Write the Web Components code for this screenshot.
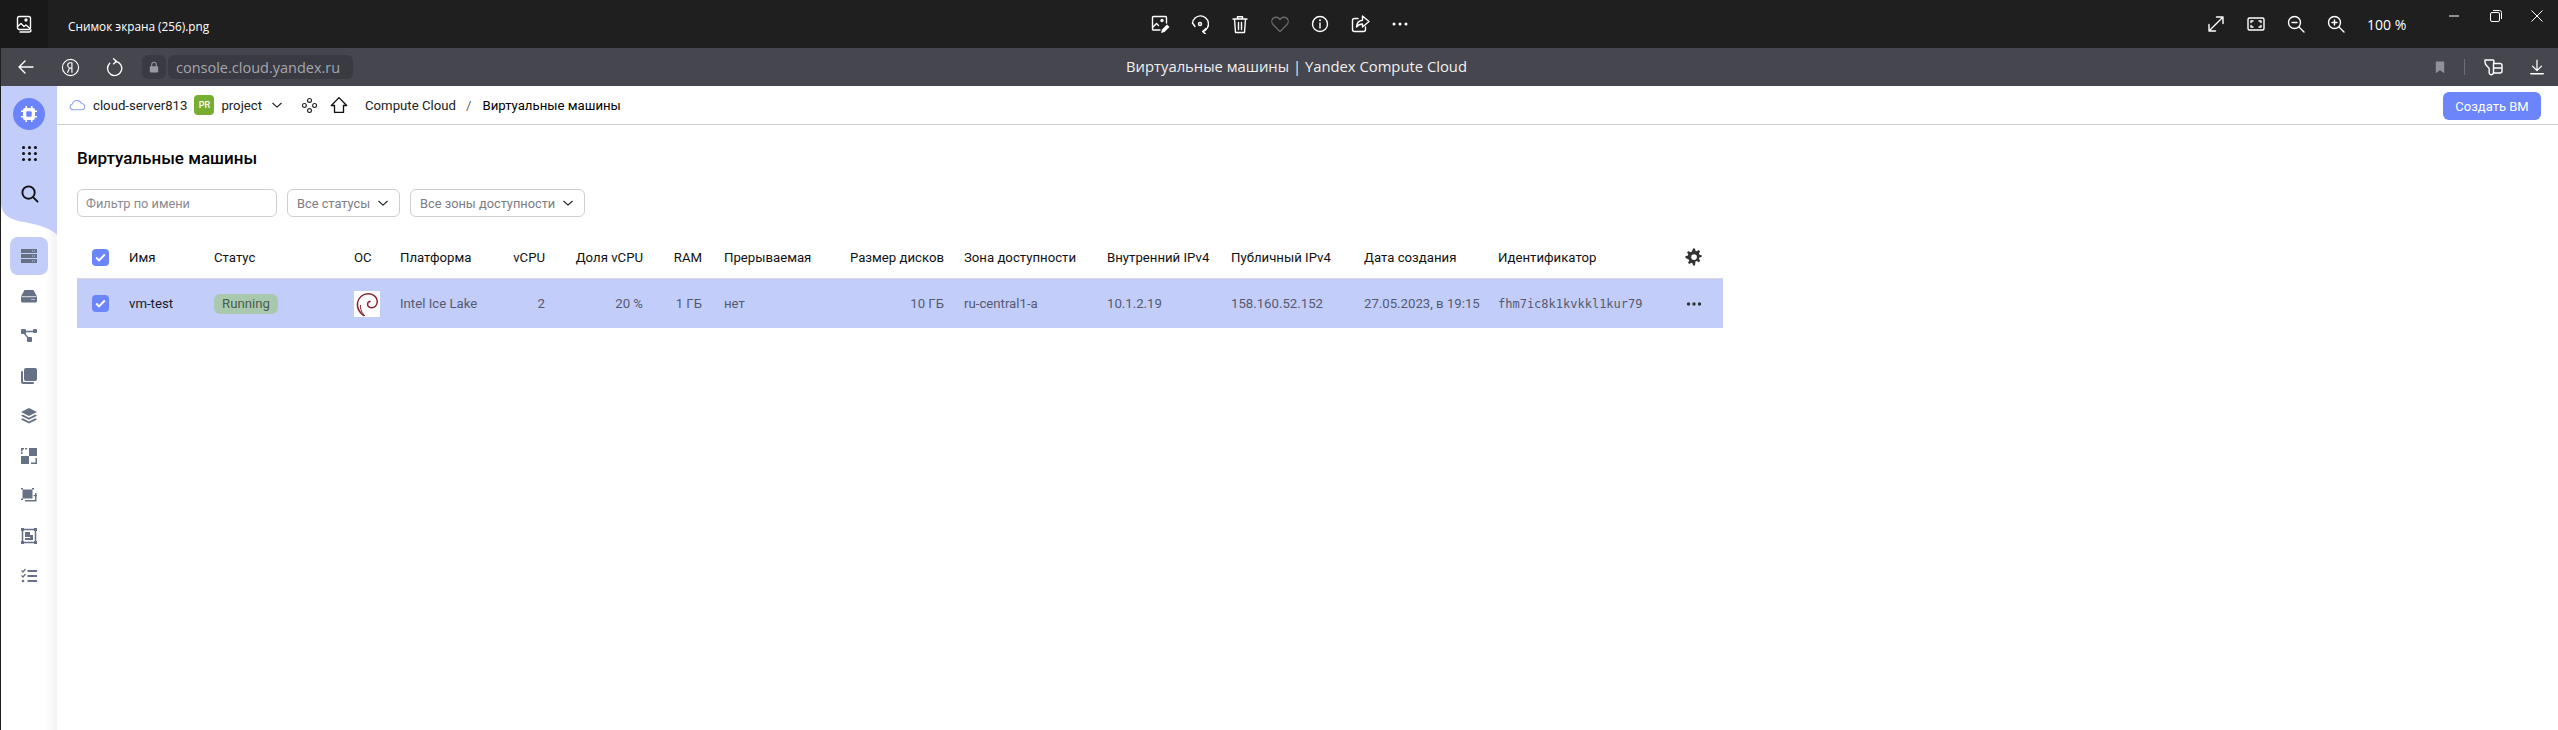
<!DOCTYPE html>
<html lang="ru"><head><meta charset="utf-8"><title>Виртуальные машины</title>
<style>
html,body{margin:0;padding:0;background:#fff;width:2558px;height:730px;overflow:hidden}
body{font-family:Roboto,"Liberation Sans",sans-serif;display:flex;flex-direction:column}
</style></head><body>
<app-titlebar>Снимок экрана (256).png</app-titlebar>
<browser-bar url="console.cloud.yandex.ru">Виртуальные машины | Yandex Compute Cloud</browser-bar>
<console-shell>
  <side-nav slot="nav"></side-nav>
  <cloud-header slot="header"></cloud-header>
  <vm-page>
    <span slot="title">Виртуальные машины</span>
    <vm-filter slot="filters" kind="input" style="width:200px">Фильтр по имени</vm-filter>
    <vm-filter slot="filters" style="width:113px">Все статусы</vm-filter>
    <vm-filter slot="filters" style="width:175px">Все зоны доступности</vm-filter>
    <vm-row head>
      <vm-cell><ui-check></ui-check></vm-cell><vm-cell>Имя</vm-cell><vm-cell>Статус</vm-cell><vm-cell>ОС</vm-cell><vm-cell>Платформа</vm-cell>
      <vm-cell end>vCPU</vm-cell><vm-cell end>Доля vCPU</vm-cell><vm-cell end>RAM</vm-cell><vm-cell pad="22">Прерываемая</vm-cell><vm-cell end>Размер дисков</vm-cell>
      <vm-cell pad="20">Зона доступности</vm-cell><vm-cell>Внутренний IPv4</vm-cell><vm-cell>Публичный IPv4</vm-cell><vm-cell>Дата создания</vm-cell><vm-cell>Идентификатор</vm-cell>
      <vm-cell pad="5"><ui-icon name="gear" size="18" style="color:#333"></ui-icon></vm-cell>
    </vm-row>
    <vm-row selected>
      <vm-cell><ui-check></ui-check></vm-cell><vm-cell strong>vm-test</vm-cell><vm-cell><status-badge>Running</status-badge></vm-cell><vm-cell><os-logo></os-logo></vm-cell><vm-cell>Intel Ice Lake</vm-cell>
      <vm-cell end>2</vm-cell><vm-cell end>20 %</vm-cell><vm-cell end>1 ГБ</vm-cell><vm-cell pad="22">нет</vm-cell><vm-cell end>10 ГБ</vm-cell>
      <vm-cell pad="20">ru-central1-a</vm-cell><vm-cell>10.1.2.19</vm-cell><vm-cell>158.160.52.152</vm-cell><vm-cell>27.05.2023, в 19:15</vm-cell><vm-cell mono>fhm7ic8k1kvkkl1kur79</vm-cell>
      <vm-cell pad="5"><ui-icon name="dots" size="18" style="color:#333"></ui-icon></vm-cell>
    </vm-row>
  </vm-page>
</console-shell>
<script>
const s='fill="none" stroke="currentColor" stroke-width="1.4" stroke-linecap="round" stroke-linejoin="round"';
const ICONS={
 photo:`<g ${s}><rect x="3.5" y="2.5" width="13" height="13" rx="2"/><path d="M3.5 12.5l3.5-3 3 3 2-1.5 4 3.5"/><circle cx="12" cy="6" r="1"/><path d="M6 18h9a2 2 0 0 0 2-2"/></g>`,
 edit:`<g ${s}><path d="M10 16H3.5a1 1 0 0 1-1-1V3.5a1 1 0 0 1 1-1h12a1 1 0 0 1 1 1V9"/><path d="M3 13l3.5-3.5 2 2"/><circle cx="12" cy="6.5" r="1"/></g><path d="M11 19l1-3.5 5-5 2.500 2.500-5 5z" fill="currentColor"/>`,
 rotate:`<g ${s}><path d="M2.500 9A8 8 0 1 1 13 17.500"/><path d="M16 14.500l-3.300 3 3.300 3"/><path d="M2.500 9L5 12.500"/><circle cx="10" cy="10" r="1.500"/></g>`,
 trash:`<g ${s}><path d="M3 5h14M7.500 5V2.800h5V5M4.500 5l1 13.500h9L15.500 5M8.500 8.500v7M11.500 8.500v7"/></g>`,
 heart:`<path d="M10 17.500L3 10.500a4.300 4.300 0 0 1 0-6 4.200 4.200 0 0 1 6 0l1 1 1-1a4.200 4.200 0 0 1 6 0 4.300 4.300 0 0 1 0 6z" fill="none" stroke="currentColor" stroke-width="1.300"/>`,
 info:`<g ${s}><circle cx="10" cy="10" r="7.500"/><path d="M10 9v5"/></g><circle cx="10" cy="6.300" r="1" fill="currentColor"/>`,
 share:`<g ${s}><path d="M8 4.500H4.500a2 2 0 0 0-2 2v9a2 2 0 0 0 2 2h9a2 2 0 0 0 2-2V13"/></g><path d="M12.500 2l6.500 5.500-6.500 5.500V10c-3 0-4.500 1-6 3 .3-4 2.500-6.500 6-6.800z" fill="none" stroke="currentColor" stroke-width="1.400" stroke-linejoin="round"/>`,
 more:`<circle cx="4" cy="10" r="1.500" fill="currentColor"/><circle cx="10" cy="10" r="1.500" fill="currentColor"/><circle cx="16" cy="10" r="1.500" fill="currentColor"/>`,
 expand:`<g ${s} stroke-linecap="butt"><path d="M3 17L17 3M10.500 3H17v6.500M3 10.500V17h6.500"/></g>`,
 fit:`<g ${s}><rect x="2" y="4" width="16" height="12" rx="1.500"/><path d="M5 8.500V7h2M15 8.500V7h-2M5 11.500V13h2M15 11.500V13h-2"/></g>`,
 zoomout:`<g ${s}><circle cx="8.500" cy="8.500" r="6"/><path d="M13 13l5 5M6 8.500h5"/></g>`,
 zoomin:`<g ${s}><circle cx="8.500" cy="8.500" r="6"/><path d="M13 13l5 5M6 8.500h5M8.500 6v5"/></g>`,
 minimize:`<path d="M0 10h10" transform="translate(5 0)" stroke="currentColor" stroke-width="1"/>`,
 restore:`<g fill="none" stroke="currentColor" stroke-width="1"><rect x="4.500" y="6.500" width="9" height="9" rx="1.500"/><path d="M7 4.500h6.500a2 2 0 0 1 2 2V13"/></g>`,
 close:`<path d="M4.500 4.500l11 11M15.500 4.500l-11 11" stroke="currentColor" stroke-width="1"/>`,
 back:`<g ${s} stroke-width="1.200"><path d="M17 10H3M9 4l-6 6 6 6"/></g>`,
 ya:`<circle cx="10" cy="10" r="8.500" fill="none" stroke="currentColor" stroke-width="1.200"/><path d="M11.500 15.500V5H9.800C8 5 7 6 7 7.700c0 1.500.8 2.400 2 2.800L6.800 15.500M11.500 10.700H9.500" fill="none" stroke="currentColor" stroke-width="1.200"/>`,
 reload:`<g ${s} stroke-width="1.200"><path d="M11 3.500A7.500 7.500 0 1 1 5 5.500"/><path d="M9 .8l3 2.700-3 2.700"/></g>`,
 lock:`<path d="M6 9V6.500a4 4 0 0 1 8 0V9h.5A1.500 1.500 0 0 1 16 10.500v6a1.500 1.500 0 0 1-1.500 1.500h-9A1.500 1.500 0 0 1 4 16.500v-6A1.500 1.500 0 0 1 5.500 9zm1.500 0h5V6.500a2.500 2.500 0 0 0-5 0z" fill="currentColor"/>`,
 bookmark:`<path d="M4 2h12v17l-6-4.500L4 19z" fill="currentColor"/>`,
 tabs:`<g fill="none" stroke="currentColor" stroke-width="1.400" stroke-linejoin="round"><path d="M2 3h8c.8 0 1 .6 1 1.200L10.500 6.500v9a2.500 2.500 0 0 1-2 2.300 2.200 2.200 0 0 1-2.300-2.100V12C6 9.500 2 9 2 5z"/><path d="M10.500 6.500H17a2 2 0 0 1 2 2V14a2 2 0 0 1-2 2H10M10.500 11H19"/></g>`,
 download:`<g ${s} stroke-width="1.200"><path d="M10 2.500v11M5 9l5 5 5-5M3 17.500h14"/></g>`,
 chevron:`<path d="M4 7.500l6 5.500 6-5.500" fill="none" stroke="currentColor" stroke-width="1.600" stroke-linecap="round" stroke-linejoin="round"/>`,
 cloud:`<path d="M5 16a3.700 3.700 0 0 1-.8-7.300A6 6 0 0 1 15.500 8a4 4 0 0 1 0 8z" fill="none" stroke="currentColor" stroke-width="1.300" stroke-linejoin="round"/>`,
 pad:`<g fill="none" stroke="currentColor" stroke-width="1.300"><circle cx="10" cy="4" r="2.300"/><circle cx="10" cy="16" r="2.300"/><circle cx="4" cy="10" r="2.300"/><circle cx="16" cy="10" r="2.300"/></g>`,
 home:`<path d="M10 1.800L1.500 10.500h3.500v7.700h10v-7.700h3.500z" fill="none" stroke="currentColor" stroke-width="1.500" stroke-linejoin="round"/>`,
 chip:`<g fill="#fff"><rect x="4" y="4" width="12" height="12" rx="2"/><path d="M6.500 2h1.500v2H6.500zM12 2h1.500v2H12zM6.500 16h1.500v2H6.500zM12 16h1.500v2H12zM2 6.500h2V8H2zM2 12h2v1.500H2zM16 6.500h2V8h-2zM16 12h2v1.500h-2z"/></g><rect x="7.300" y="7.300" width="5.400" height="5.400" rx="1" fill="#6b84fb"/>`,
 grid:`<g fill="currentColor">${[3,10,17].flatMap(y=>[3,10,17].map(x=>`<circle cx="${x}" cy="${y}" r="1.800"/>`)).join('')}</g>`,
 search:`<g fill="none" stroke="currentColor" stroke-width="2" stroke-linecap="round"><circle cx="9" cy="9" r="6.500"/><path d="M14 14l4.500 4.500"/></g>`,
 servers:`<g fill="currentColor"><path d="M0 1h16v4H0zM0 6h16v4H0zM0 11h16v4H0z"/></g><g fill="#c3cdf9"><path d="M11 2.500h1v1h-1zM13 2.500h1v1h-1zM11 7.500h1v1h-1zM13 7.500h1v1h-1zM11 12.500h1v1h-1zM13 12.500h1v1h-1z"/></g>`,
 disk:`<path fill-rule="evenodd" d="M3.500 2h9L16 8.500V13a1.500 1.500 0 0 1-1.500 1.500h-13A1.500 1.500 0 0 1 0 13V8.500zM10.500 11h1v1h-1zM12.500 11h1v1h-1z" fill="currentColor"/><path d="M.5 8.700h15" stroke="#fff" stroke-width=".8"/>`,
 net:`<g fill="currentColor"><rect x="0" y="1" width="5" height="5" rx="1"/><rect x="12" y="1" width="4" height="4" rx="1"/><rect x="6" y="9" width="5" height="5" rx="1"/></g><path d="M4 3.500h9M3 5l5 6" stroke="currentColor" stroke-width="1.300" fill="none"/>`,
 copies:`<path d="M5 0h9a2 2 0 0 1 2 2v9a2 2 0 0 1-2 2H5a2 2 0 0 1-2-2V2a2 2 0 0 1 2-2z" fill="currentColor"/><path d="M1 4v9.500A1.500 1.500 0 0 0 2.500 15H12" fill="none" stroke="currentColor" stroke-width="2" stroke-linecap="round"/>`,
 layers:`<g fill="currentColor"><path d="M8 0l8 4-8 4-8-4z"/><path d="M1.700 6.500L8 9.700l6.300-3.200L16 7.700 8 11.700 0 7.700z"/><path d="M1.700 10.300L8 13.500l6.300-3.200L16 11.500l-8 4-8-4z"/></g>`,
 blocks:`<g fill="currentColor"><path d="M0 0h3v1.500H1.500V3H0zM4 0h2v1.500H4z"/><rect x="8" y="0" width="8" height="8"/><rect x="0" y="8" width="8" height="8"/><path d="M14.500 10H16v6h-6v-1.500h4.500z"/><path d="M0 3.500h1.500V6H0z"/></g>`,
 snaps:`<g fill="currentColor"><rect x="1.500" y="1.500" width="10" height="9"/><path d="M0 0h2v1.500H0zM11 0h2v1.500h-2zM0 10.500h2V12H0z"/><path d="M14 5h1.500v8.500H4V12h10z"/><path d="M12.500 7H16v1.200h-3.500z"/></g>`,
 frame:`<g fill="none" stroke="currentColor" stroke-width="1.500"><rect x="1.500" y="1.500" width="13" height="13"/></g><g fill="currentColor"><rect x="0" y="0" width="3" height="3"/><rect x="13" y="0" width="3" height="3"/><rect x="0" y="13" width="3" height="3"/><rect x="13" y="13" width="3" height="3"/><rect x="4" y="4" width="5" height="5"/><rect x="9" y="7" width="3" height="5"/><rect x="4" y="10" width="8" height="2"/></g>`,
 tasks:`<g stroke="currentColor" fill="none"><path d="M6.500 3h9.500M6.500 8h9.500M6.500 13h9.500" stroke-width="1.800"/><path d="M.5 2.500l1.500 1.500 2.500-3M.5 7.500l1.500 1.500 2.500-3" stroke-width="1.200"/></g><circle cx="2" cy="13" r="1.300" fill="currentColor"/>`,
 gear:`<path fill-rule="evenodd" d="M8 0h2l.5 2.300 1.400.6 2-1.300 1.500 1.500-1.300 2 .6 1.400 2.300.5v2l-2.300.5-.6 1.400 1.300 2-1.500 1.500-2-1.300-1.400.6L10 18H8l-.5-2.300-1.400-.6-2 1.300-1.500-1.500 1.300-2-.6-1.400L0 10V8l2.300-.5.6-1.400-1.300-2 1.500-1.500 2 1.300 1.400-.6zM9 6a3 3 0 1 0 0 6 3 3 0 0 0 0-6z" fill="currentColor" transform="translate(.5 .5) scale(.95)"/>`,
 dots:`<circle cx="3.500" cy="9" r="1.700" fill="currentColor"/><circle cx="9" cy="9" r="1.700" fill="currentColor"/><circle cx="14.500" cy="9" r="1.700" fill="currentColor"/>`
};
const VB={servers:16,disk:16,net:16,copies:16,layers:16,blocks:16,snaps:16,frame:16,tasks:16,gear:18,dots:18};
function def(name,html){
  customElements.define(name,class extends HTMLElement{
    constructor(){super();this.attachShadow({mode:'open'});}
    connectedCallback(){ this.shadowRoot.innerHTML=typeof html==='function'?html(this):html; }
  });
}
const ic=(n,sz,col,st='')=>`<ui-icon name="${n}" size="${sz}" style="${col?`color:${col};`:''}${st}"></ui-icon>`;
customElements.define('ui-icon',class extends HTMLElement{
  constructor(){super();this.attachShadow({mode:'open'});}
  connectedCallback(){
    const n=this.getAttribute('name'),sz=this.getAttribute('size')||20,v=VB[n]||20;
    this.shadowRoot.innerHTML=`<style>:host{display:inline-flex;flex:none;width:${sz}px;height:${sz}px}svg{display:block;width:100%;height:100%}</style><svg viewBox="0 0 ${v} ${v}" xmlns="http://www.w3.org/2000/svg">${ICONS[n]}</svg>`;
  }
});
def('app-titlebar',`<style>
:host{display:flex;flex:none;height:48px;background:#201f1f;color:#fff;position:relative;font:11.800px "Open Sans","Noto Sans",sans-serif}
.app{width:48px;background:#1a1919;display:flex;align-items:center;justify-content:center}
.name{width:1100px;padding:3px 0 0 20px;box-sizing:border-box;display:flex;align-items:center}
.tools{display:flex;width:280px;margin-left:-8px}
.tools span{width:40px;display:flex;justify-content:center;align-items:center}
.right{margin-left:auto;display:flex;align-items:center}
.right span{width:40px;display:flex;justify-content:center}
.zoom{font-size:14px;margin-left:11px;width:51px;white-space:nowrap}
.win{display:flex;align-self:flex-start;margin-left:15px;width:125px;padding-top:6px}
.win span{width:46px;display:flex;justify-content:center}
</style>
<div class="app">${ic('photo',20,'#fff')}</div><div class="name"><slot></slot></div>
<div class="tools">
<span>${ic('edit',20,'#fff')}</span><span>${ic('rotate',20,'#fff')}</span><span>${ic('trash',20,'#fff')}</span><span>${ic('heart',20,'#6a6a6a')}</span><span>${ic('info',20,'#fff')}</span><span>${ic('share',20,'#fff')}</span><span>${ic('more',20,'#fff')}</span>
</div>
<div class="right"><span>${ic('expand',20,'#fff')}</span><span>${ic('fit',20,'#fff')}</span><span>${ic('zoomout',20,'#fff')}</span><span>${ic('zoomin',20,'#fff')}</span>
<div class="zoom">100 %</div>
<div class="win"><span>${ic('minimize',20,'#fff')}</span><span>${ic('restore',20,'#fff')}</span><span>${ic('close',20,'#fff')}</span></div></div>`);
def('browser-bar',h=>`<style>
:host{display:flex;flex:none;height:38px;background:#46464f;color:#eee;align-items:center;position:relative;font:15px "Open Sans","Noto Sans",sans-serif;box-sizing:border-box;padding-left:15px;border-left:1px solid #201f1f}
.n{width:20px;display:flex;justify-content:center}
.pill{background:#3a3a43;height:24px;border-radius:6px;display:flex;align-items:center;color:#a6a6ae}
.lock{width:24px;justify-content:center}
.url{padding:0 8px;width:185px;box-sizing:border-box;margin-left:2px;font-size:14.500px;white-space:nowrap}
.title{position:absolute;left:34px;right:0;text-align:center;pointer-events:none;top:8px;line-height:20px;font-size:14.800px;color:#f0f0f0}
.r{margin-left:auto;display:flex;align-items:center}
.sep{width:1px;height:16px;background:#6c6c74;margin:0 18px 0 17px}
</style>
<span class="n">${ic('back',20,'#fff')}</span><span class="n" style="margin-left:24px">${ic('ya',19,'#fff')}</span><span class="n" style="margin-left:24px">${ic('reload',19,'#fff')}</span>
<span class="pill lock" style="margin-left:18px">${ic('lock',14,'#9a9aa2')}</span><span class="pill url">console.cloud.yandex.ru</span>
<div class="title"><slot></slot></div>
<div class="r">${ic('bookmark',14,'#909098')}<span class="sep"></span>${ic('tabs',20,'#fff')}<span style="width:25px"></span>${ic('download',18,'#fff')}<span style="width:12px"></span></div>`);
def('console-shell',`<style>
:host{display:grid;flex:1;min-height:0;grid-template-columns:56px 1fr;grid-template-rows:39px 1fr;border-left:1px solid #201f1f;background:#fff}
.nav{grid-row:1/3}
.hd{border-bottom:1px solid #d0d0d0;box-sizing:border-box}
</style><div class="nav"><slot name="nav"></slot></div><div class="hd"><slot name="header"></slot></div><div class="main"><slot></slot></div>`);
def('side-nav',`<style>
:host{display:flex;flex-direction:column;align-items:center;height:100%;position:relative;background:linear-gradient(90deg,#fff 78%,#f3f3f5 100%);width:56px;color:#667186}
.wave{position:absolute;left:0;top:0;width:56px;height:150px}
.top{position:relative;display:flex;flex-direction:column;align-items:center;color:#111;height:151px;padding-top:12px;box-sizing:border-box}
.logo{width:32px;height:32px;border-radius:50%;background:#6b84fb;display:flex;align-items:center;justify-content:center}
.i{width:38px;height:40px;display:flex;align-items:center;justify-content:center;position:relative;flex:none}
.active{height:38px;background:#c3cdf9;border-radius:8px;margin-bottom:1px;margin-top:0}
</style>
<svg class="wave" viewBox="0 0 56 150" preserveAspectRatio="none"><path d="M0 0H56V149C50 143 40 139 23 136C10 134 1 130 0 118z" fill="#c3cdf9"/></svg>
<div class="top"><div class="logo">${ic('chip',20)}</div>
<div style="height:15px"></div>${ic('grid',17,'#111')}<div style="height:22px"></div>${ic('search',19,'#111')}</div>
<div class="i active">${ic('servers',16)}</div>
${['disk','net','copies','layers','blocks','snaps','frame','tasks'].map(n=>`<div class="i">${ic(n,16)}</div>`).join('')}`);
def('cloud-header',`<style>
:host{display:flex;align-items:center;height:38px;font-size:13.200px;color:#222;white-space:nowrap;position:relative;padding-left:12px}
.pr{width:20px;height:20px;border-radius:4px;background:#77ae32;color:#fff;font-size:9px;font-weight:500;display:flex;align-items:center;justify-content:center;margin:0 7px 0 7px}
.btn{position:absolute;right:17px;top:6px;height:28px;width:98px;border-radius:6px;background:#6d85fb;color:#fff;font-size:13px;display:flex;align-items:center;justify-content:center}
.sl{color:#666;margin:0 11px 0 10px}
b{font-weight:400;color:#000}
</style>
${ic('cloud',16,'#8fa2f5')}<span style="margin-left:8px">cloud-server813</span><span class="pr">PR</span><span>project</span>
<span style="margin-left:8px;display:flex">${ic('chevron',14,'#222')}</span>
<span style="margin-left:17px;display:flex">${ic('pad',17,'#222')}</span><span style="margin-left:12px;display:flex">${ic('home',18,'#111')}</span>
<span style="margin-left:17px">Compute Cloud</span><span class="sl">/</span><b>Виртуальные машины</b>
<div class="btn">Создать ВМ</div>`);
def('vm-page',`<style>
:host{display:block;padding:0 0 0 20px;--cols:52px 85px 140px 46px 100px 45px 98px 59px 122px 120px 163px 124px 133px 134px 182px 43px}
.t{font-size:17px;font-weight:500;color:#000;padding-top:23px;line-height:20px;height:20px}
.f{display:flex;gap:10px;margin-top:21px;margin-bottom:19px}
.table{width:1646px}
</style><div class="t"><slot name="title"></slot></div><div class="f"><slot name="filters"></slot></div><div class="table"><slot></slot></div>`);
def('vm-filter',h=>`<style>
:host{display:flex;align-items:center;height:28px;box-sizing:border-box;border:1px solid #cfcfcf;border-radius:6px;font-size:12.800px;color:#7c7c84;padding:0 9px;white-space:nowrap;flex:none}
:host([kind=input]){color:#8a8a92;padding-left:8px}
.sp{flex:1}
</style><slot></slot><span class="sp"></span>${h.getAttribute('kind')==='input'?'':ic('chevron',14,'#222')}`);
def('vm-row',`<style>
:host{display:grid;grid-template-columns:var(--cols);height:43px;box-sizing:border-box;border-bottom:1px solid #d8d8dc;font-size:13.200px;color:#111;white-space:nowrap;align-items:center}
:host([selected]){height:49px;background:#c3cdf9;border-bottom:0;color:#555a70}
</style><slot></slot>`);
def('vm-cell',`<style>
:host{display:flex;align-items:center;height:100%;min-width:0;box-sizing:border-box}
:host([end]){justify-content:flex-end}
:host([pad="22"]){padding-left:22px}
:host([pad="20"]){padding-left:20px}
:host([pad="5"]){padding-left:5px}
:host([strong]){color:#1a1a2a}
:host([mono]){font:12px "DejaVu Sans Mono","Liberation Mono",monospace}
</style><slot></slot>`);
def('ui-check',`<style>
:host{display:flex;width:17px;height:17px;background:#6d85fb;border-radius:4px;margin-left:15px;align-items:center;justify-content:center}
</style><svg width="11" height="9" viewBox="0 0 11 9"><path d="M1.200 4.500l2.800 2.800L9.800 1.500" fill="none" stroke="#fff" stroke-width="1.900"/></svg>`);
def('status-badge',`<style>
:host{display:inline-flex;align-items:center;justify-content:center;height:20px;width:64px;background:#a9c9af;border-radius:6px;color:#4b5a52}
</style><slot></slot>`);
def('os-logo',`<style>:host{display:block;width:26px;height:26px;background:#fff}svg{display:block}</style>
<svg width="26" height="26" viewBox="0 0 26 26"><path d="M9.500 24.500C5 21 2.800 17 3.500 12 4.300 6.500 9 2.500 14.500 2.700c5 .2 8.800 3.500 8.800 7.800 0 4-3 6.500-6 6.300-2.500-.2-4-2-3.700-4 .2-1.500 1.300-2.300 2.500-2.300" fill="none" stroke="#8a2233" stroke-width="1.500" stroke-linecap="round"/><path d="M11 25c-3-3-5-7-4.500-11" fill="none" stroke="#8a2233" stroke-width="1"/></svg>`);
</script>
</body></html>
